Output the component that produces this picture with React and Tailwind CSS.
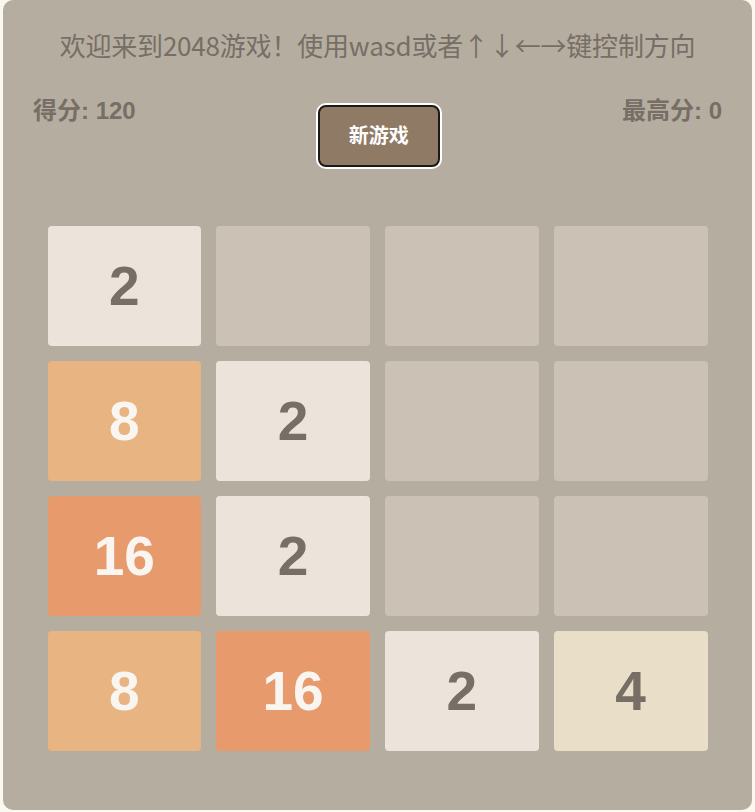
const tiles = [
    2, 0, 0, 0,
    8, 2, 0, 0,
    16, 2, 0, 0,
    8, 16, 2, 4,
];

const tileStyle = {
    0: "bg-[#cbc2b5]",
    2: "bg-[#ece4db] text-[#776e65]",
    4: "bg-[#e9dfc8] text-[#776e65]",
    8: "bg-[#e8b482] text-[#f9f6f2]",
    16: "bg-[#e79a6c] text-[#f9f6f2]",
};

const Tile = ({ value }) => (
    <div
        className={`h-[120px] rounded-[4px] flex items-center justify-center text-[55px] font-bold ${tileStyle[value]}`}
    >
        {value ? value : ""}
    </div>
);

export default function App() {
    return (
        <div className="min-h-[812px] bg-[#faf8ef] flex justify-center">
            <div className="w-[749px] h-[810px] bg-[#b6ada1] rounded-[10px] pt-[26px] font-['Liberation_Sans','Noto_Sans_CJK_SC',sans-serif]">
                {/* Title */}
                <div className="text-center text-[26px] leading-[38px] tracking-[-0.2px] text-[#776e65] font-['Noto_Sans_CJK_SC',sans-serif]">
                    欢迎来到2048游戏！使用wasd或者↑↓←→键控制方向
                </div>

                {/* Scores + button */}
                <div className="flex justify-between items-start px-[30px] mt-[34px]">
                    <div className="text-[24px] leading-[26px] font-bold text-[#776e65]">得分: 120</div>
                    <button className="mt-[7px] w-[122px] h-[62px] rounded-[8px] bg-[#8f7a66] border-2 border-[#1c1a18] ring-2 ring-white text-white font-bold text-[20px]">
                        新游戏
                    </button>
                    <div className="text-[24px] leading-[26px] font-bold text-[#776e65]">最高分: 0</div>
                </div>

                {/* Board */}
                <div className="w-[660px] mx-auto mt-[59px] grid grid-cols-4 gap-[15px]">
                    {tiles.map((v, i) => (
                        <Tile key={i} value={v} />
                    ))}
                </div>
            </div>
        </div>
    );
}
